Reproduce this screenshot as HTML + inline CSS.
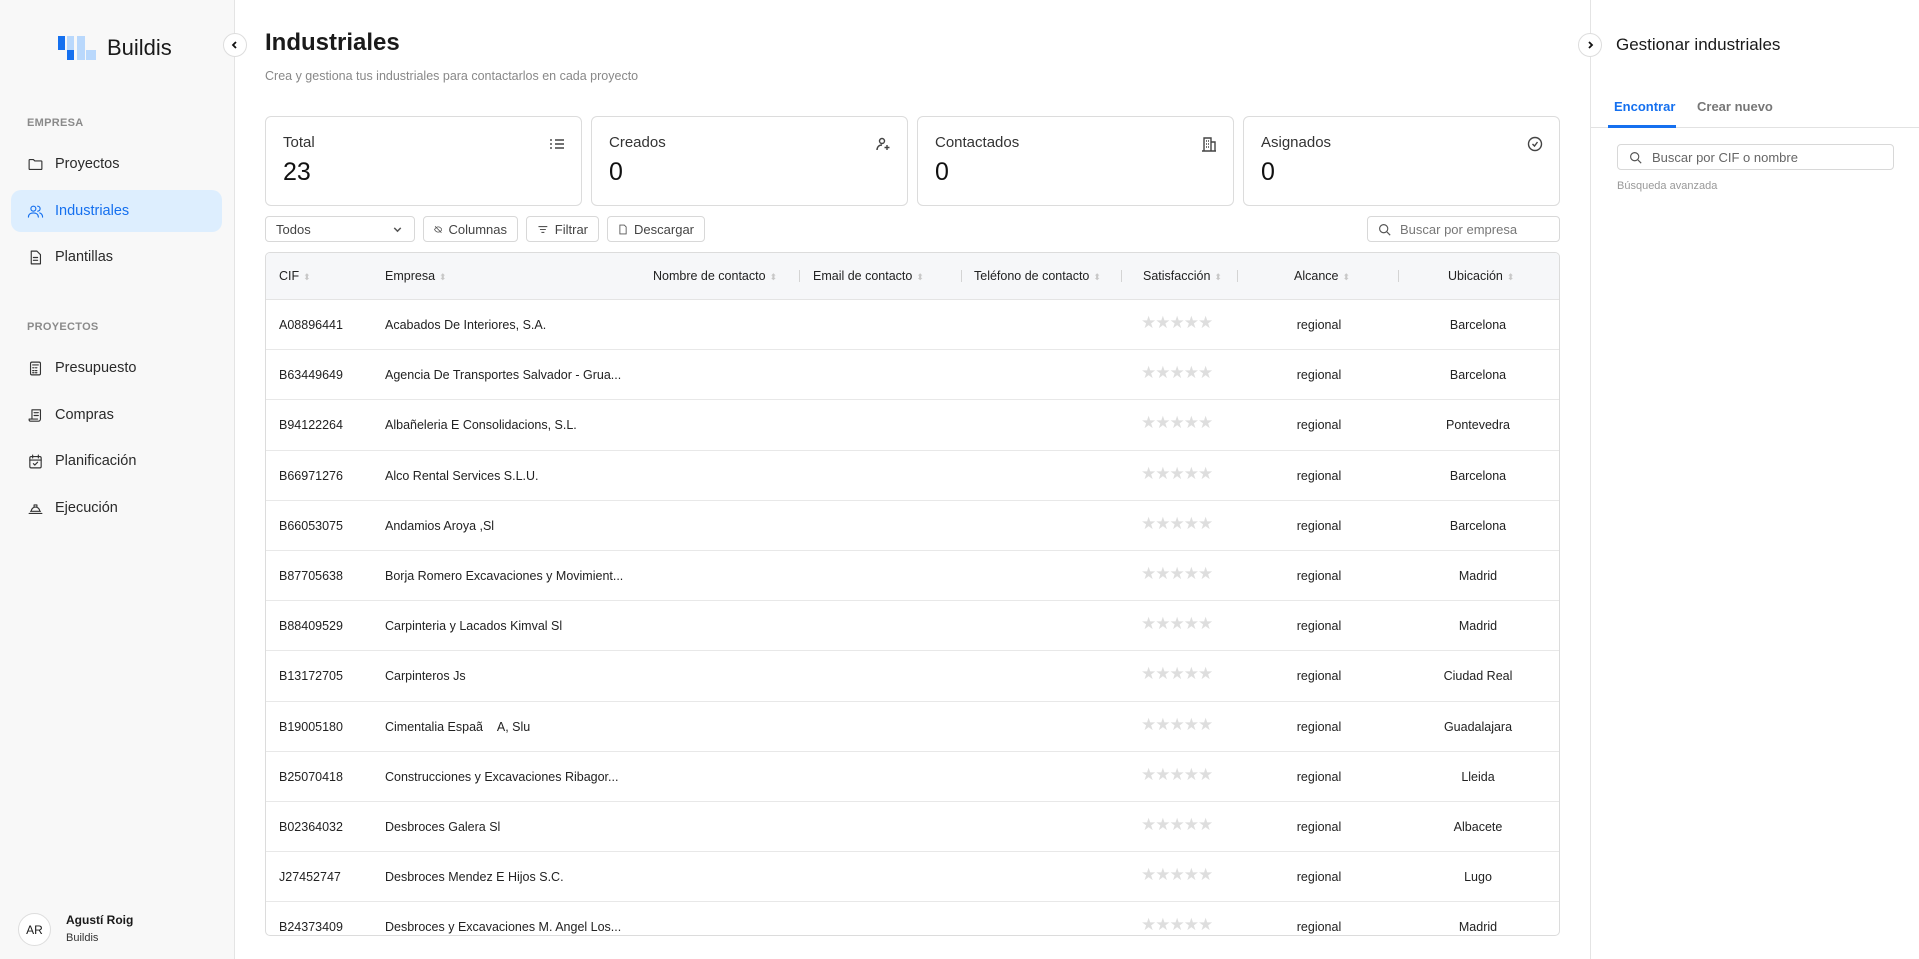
<!DOCTYPE html>
<html><head><meta charset="utf-8"><style>
*{box-sizing:border-box;margin:0;padding:0}
body{width:1919px;height:959px;overflow:hidden;font-family:"Liberation Sans",sans-serif;color:#1a1a1a;background:#fff;position:relative}
.abs{position:absolute}
.side{position:absolute;left:0;top:0;width:235px;height:959px;background:#f8f8f8;border-right:1px solid #e4e4e4}
.sec{position:absolute;left:27px;font-size:11px;color:#8a8a8a;font-weight:bold;letter-spacing:.3px}
.nav{position:absolute;left:11px;width:211px;height:42px;display:flex;align-items:center;padding-left:16px;font-size:14.5px;color:#2a2a2a}
.nav svg{width:17px;height:17px;margin-right:11px;fill:none;stroke:#333;stroke-width:1.6;stroke-linecap:round;stroke-linejoin:round}
.nav.act{background:#ddeefe;border-radius:10px;color:#1570ef}
.nav.act svg{stroke:#1570ef}
.circ{position:absolute;width:24px;height:24px;border-radius:50%;border:1px solid #ddd;background:#fff;display:flex;align-items:center;justify-content:center}
.card{position:absolute;top:116px;height:90px;width:317px;border:1px solid #dcdcdc;border-radius:6px}
.card .l{position:absolute;left:17px;top:17px;font-size:15px;color:#333}
.card .v{position:absolute;left:17px;top:41px;font-size:25px;color:#111}
.card svg{position:absolute;right:16px;top:19px;width:16px;height:16px;fill:none;stroke:#444;stroke-width:1.4}
.btn{position:absolute;top:216px;height:26px;border:1px solid #d8d8d8;border-radius:4px;font-size:13px;color:#444;display:flex;align-items:center;padding:0 10px}
.btn svg{width:13px;height:13px;margin-right:6px;fill:none;stroke:#555;stroke-width:1.4}
.tbl{position:absolute;left:265px;top:252px;width:1295px;height:684px;border:1px solid #dcdcdc;border-radius:5px;overflow:hidden}
.hd{position:absolute;left:0;top:0;width:100%;height:47px;background:#f6f7f9;border-bottom:1px solid #e4e4e4}
.t{position:absolute;font-size:12.5px;white-space:nowrap}
.hd .t{top:16px;color:#222}
.s{color:#c8c8c8;font-size:9px;margin-left:4px}
.sep{position:absolute;top:17px;width:1px;height:12px;background:#d4d4d4}
.row{position:absolute;left:0;width:100%;height:50.2px;border-bottom:1px solid #e8e8e8}
.row .t{top:18px;color:#222}
.row .st{color:#dedede!important;font-size:17px;letter-spacing:-1px;top:13px!important}
</style></head><body>
<div class="side">
  <svg class="abs" style="left:58px;top:36px" width="40" height="25" viewBox="0 0 40 25"><rect x="0" y="0" width="7" height="14" fill="#1570ef"/><rect x="9" y="0" width="7" height="14" fill="#b9d8fc"/><rect x="9" y="14" width="7" height="10" fill="#1570ef"/><rect x="19" y="0" width="8" height="24" fill="#b9d8fc"/><rect x="28" y="14" width="10" height="10" fill="#b9d8fc"/></svg>
  <div class="abs" style="left:107px;top:35px;font-size:22px;color:#1a1a1a">Buildis</div>
  <div class="sec" style="top:117px">EMPRESA</div>
  <div class="nav" style="top:143px"><svg viewBox="0 0 24 24"><path d="M3 6a1 1 0 0 1 1-1h5l2 2h9a1 1 0 0 1 1 1v10a1 1 0 0 1-1 1H4a1 1 0 0 1-1-1z"/></svg>Proyectos</div>
  <div class="nav act" style="top:190px"><svg viewBox="0 0 24 24"><circle cx="9" cy="8" r="3.5"/><path d="M2 20c0-4 3-6 7-6s7 2 7 6"/><path d="M15 4.5a3.5 3.5 0 0 1 0 7M18 14c2 .7 4 2.5 4 6"/></svg>Industriales</div>
  <div class="nav" style="top:236px"><svg viewBox="0 0 24 24"><path d="M6 3h8l5 5v13H6z"/><path d="M9 12h6M9 16h6"/></svg>Plantillas</div>
  <div class="sec" style="top:321px">PROYECTOS</div>
  <div class="nav" style="top:347px"><svg viewBox="0 0 24 24"><rect x="5" y="3" width="14" height="18" rx="2"/><path d="M8 7h8M8 11h2M12 11h2M8 15h2M12 15h2M8 18h2M12 18h2"/></svg>Presupuesto</div>
  <div class="nav" style="top:394px"><svg viewBox="0 0 24 24"><path d="M7 17V4h12v13a3 3 0 0 1-3 3H5a2 2 0 0 1-2-2v-1h12"/><path d="M10 8h6M10 12h6"/></svg>Compras</div>
  <div class="nav" style="top:440px"><svg viewBox="0 0 24 24"><rect x="4" y="5" width="16" height="16" rx="2"/><path d="M4 10h16M8 3v4M16 3v4M9 15l2 2 4-4"/></svg>Planificación</div>
  <div class="nav" style="top:487px"><svg viewBox="0 0 24 24"><path d="M3 19h18M5 16h14M6 16a6 6 0 0 1 12 0M10 10V7h4v3"/></svg>Ejecución</div>
  <div class="abs" style="left:18px;top:913px;width:33px;height:33px;border-radius:50%;border:1px solid #ddd;background:#fff;font-size:12px;display:flex;align-items:center;justify-content:center">AR</div>
  <div class="abs" style="left:66px;top:913px;font-size:12px;font-weight:bold">Agustí Roig</div>
  <div class="abs" style="left:66px;top:932px;font-size:11px;color:#333">Buildis</div>
</div>
<div class="circ" style="left:223px;top:33px"><svg width="10" height="10" viewBox="0 0 10 10"><path d="M6 2L3 5l3 3" fill="none" stroke="#111" stroke-width="1.8"/></svg></div>

<div class="abs" style="left:265px;top:29px;font-size:24px;font-weight:bold">Industriales</div>
<div class="abs" style="left:265px;top:69px;font-size:12.5px;color:#888">Crea y gestiona tus industriales para contactarlos en cada proyecto</div>

<div class="card" style="left:265px"><div class="l">Total</div><div class="v">23</div><svg viewBox="0 0 16 16"><path d="M6 4h9M6 8h9M6 12h9M2 3v2M2 7v2M2 11v2"/></svg></div>
<div class="card" style="left:591px"><div class="l">Creados</div><div class="v">0</div><svg viewBox="0 0 16 16"><circle cx="7" cy="5" r="2.5"/><path d="M2 14c0-3 2-5 5-5M12 9v5M9.5 11.5h5"/></svg></div>
<div class="card" style="left:917px"><div class="l">Contactados</div><div class="v">0</div><svg viewBox="0 0 16 16"><path d="M3 15V2h7v13M10 6h4v9M1 15h14M5 5h1M7 5h1M5 8h1M7 8h1M5 11h1M7 11h1"/></svg></div>
<div class="card" style="left:1243px"><div class="l">Asignados</div><div class="v">0</div><svg viewBox="0 0 16 16"><circle cx="8" cy="8" r="6.5"/><path d="M5.5 8l2 2 3-4"/></svg></div>

<div class="btn" style="left:265px;width:150px;justify-content:space-between">Todos<svg viewBox="0 0 12 12" style="margin:0"><path d="M3 4.5l3 3 3-3"/></svg></div>
<div class="btn" style="left:423px;width:95px"><svg viewBox="0 0 16 16"><path d="M1 8s3-5 7-5 7 5 7 5-3 5-7 5-7-5-7-5zM2 2l12 12"/></svg>Columnas</div>
<div class="btn" style="left:526px;width:73px"><svg viewBox="0 0 16 16"><path d="M2 4h12M4 8h8M6 12h4"/></svg>Filtrar</div>
<div class="btn" style="left:607px;width:98px"><svg viewBox="0 0 16 16"><path d="M3 15V1h7l3 3v11z"/></svg>Descargar</div>
<div class="btn" style="left:1367px;width:193px;color:#777"><svg viewBox="0 0 16 16" style="margin-right:9px"><circle cx="7" cy="7" r="5"/><path d="M11 11l4 4"/></svg>Buscar por empresa</div>

<div class="tbl">
  <div class="hd">
    <div class="t" style="left:13px">CIF<span class="s">⬍</span></div>
    <div class="t" style="left:119px">Empresa<span class="s">⬍</span></div>
    <div class="t" style="left:387px">Nombre de contacto<span class="s">⬍</span></div>
    <div class="sep" style="left:533px"></div>
    <div class="t" style="left:547px">Email de contacto<span class="s">⬍</span></div>
    <div class="sep" style="left:695px"></div>
    <div class="t" style="left:708px">Teléfono de contacto<span class="s">⬍</span></div>
    <div class="sep" style="left:855px"></div>
    <div class="t" style="left:877px">Satisfacción<span class="s">⬍</span></div>
    <div class="sep" style="left:971px"></div>
    <div class="t" style="left:1028px">Alcance<span class="s">⬍</span></div>
    <div class="sep" style="left:1132px"></div>
    <div class="t" style="left:1182px">Ubicación<span class="s">⬍</span></div>
  </div>
  <div id="rows"></div>
</div>
<script>
var d=[["A08896441","Acabados De Interiores, S.A.","Barcelona"],["B63449649","Agencia De Transportes Salvador - Grua...","Barcelona"],["B94122264","Albañeleria E Consolidacions, S.L.","Pontevedra"],["B66971276","Alco Rental Services S.L.U.","Barcelona"],["B66053075","Andamios Aroya ,Sl","Barcelona"],["B87705638","Borja Romero Excavaciones y Movimient...","Madrid"],["B88409529","Carpinteria y Lacados Kimval Sl","Madrid"],["B13172705","Carpinteros Js","Ciudad Real"],["B19005180","Cimentalia Espaã&nbsp;&nbsp;&nbsp;&nbsp;A, Slu","Guadalajara"],["B25070418","Construcciones y Excavaciones Ribagor...","Lleida"],["B02364032","Desbroces Galera Sl","Albacete"],["J27452747","Desbroces Mendez E Hijos S.C.","Lugo"],["B24373409","Desbroces y Excavaciones M. Angel Los...","Madrid"]];
var h="";d.forEach(function(r,i){var top=47+i*50.2;h+='<div class="row" style="top:'+top+'px"><div class="t" style="left:13px">'+r[0]+'</div><div class="t" style="left:119px">'+r[1]+'</div><div class="t st" style="left:875px">★★★★★</div><div class="t" style="left:1053px;width:0"><span style="position:absolute;transform:translateX(-50%)">regional</span></div><div class="t" style="left:1212px;width:0"><span style="position:absolute;transform:translateX(-50%)">'+r[2]+'</span></div></div>';});
document.getElementById("rows").innerHTML=h;
</script>

<div class="abs" style="left:1590px;top:0;width:1px;height:959px;background:#e4e4e4"></div>
<div class="circ" style="left:1578px;top:33px"><svg width="10" height="10" viewBox="0 0 10 10"><path d="M4 2l3 3-3 3" fill="none" stroke="#111" stroke-width="1.8"/></svg></div>
<div class="abs" style="left:1616px;top:35px;font-size:17px;color:#1a1a1a">Gestionar industriales</div>
<div class="abs" style="left:1614px;top:99px;font-size:13px;color:#1570ef;font-weight:bold">Encontrar</div>
<div class="abs" style="left:1697px;top:99px;font-size:13px;color:#777;font-weight:bold">Crear nuevo</div>
<div class="abs" style="left:1591px;top:127px;width:328px;height:1px;background:#e2e2e2"></div>
<div class="abs" style="left:1608px;top:125px;width:68px;height:3px;background:#1570ef"></div>
<div class="abs" style="left:1617px;top:144px;width:277px;height:26px;border:1px solid #d8d8d8;border-radius:4px;font-size:13px;color:#666;display:flex;align-items:center;padding-left:11px"><svg width="13" height="13" viewBox="0 0 16 16" style="margin-right:10px"><circle cx="7" cy="7" r="5" fill="none" stroke="#555" stroke-width="1.4"/><path d="M11 11l4 4" stroke="#555" stroke-width="1.4"/></svg>Buscar por CIF o nombre</div>
<div class="abs" style="left:1617px;top:180px;font-size:11px;color:#999">Búsqueda avanzada</div>
</body></html>
